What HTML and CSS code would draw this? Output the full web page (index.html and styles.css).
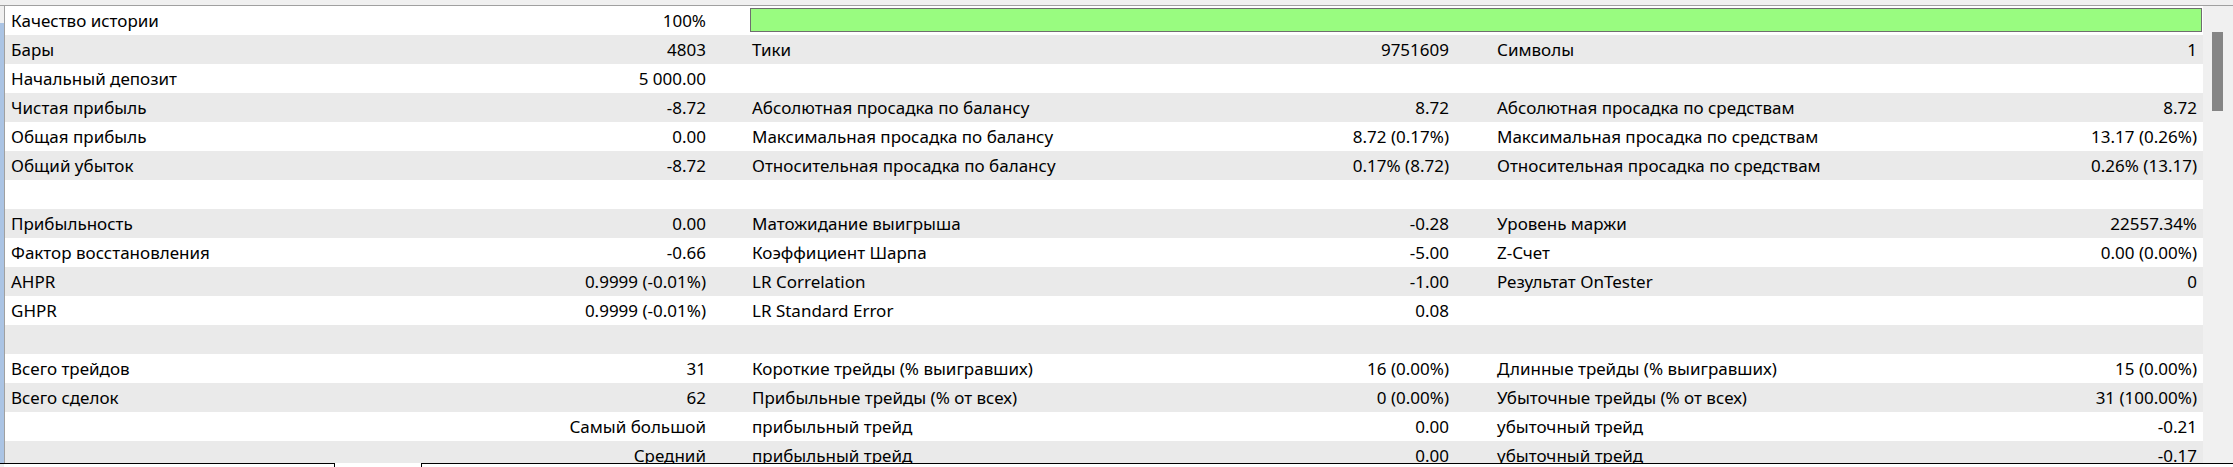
FILE: index.html
```html
<!DOCTYPE html>
<html lang="ru">
<head>
<meta charset="utf-8">
<title>Отчёт тестера</title>
<link rel="stylesheet" href="styles.css">
</head>
<body>
<div class="window">
  <div class="topband"></div>
  <div class="main">
    <div class="leftstrip"></div>
    <div class="report">
      <div class="row">
        <div class="grp g1"><span>Качество истории</span><span>100%</span></div>
        <div class="barcell"><div class="bar"></div></div>
      </div>
      <div class="row alt">
        <div class="grp g1"><span>Бары</span><span>4803</span></div>
        <div class="grp g2"><span>Тики</span><span>9751609</span></div>
        <div class="grp g3"><span>Символы</span><span>1</span></div>
      </div>
      <div class="row">
        <div class="grp g1"><span>Начальный депозит</span><span>5 000.00</span></div>
        <div class="grp g2"></div>
        <div class="grp g3"></div>
      </div>
      <div class="row alt">
        <div class="grp g1"><span>Чистая прибыль</span><span>-8.72</span></div>
        <div class="grp g2"><span>Абсолютная просадка по балансу</span><span>8.72</span></div>
        <div class="grp g3"><span>Абсолютная просадка по средствам</span><span>8.72</span></div>
      </div>
      <div class="row">
        <div class="grp g1"><span>Общая прибыль</span><span>0.00</span></div>
        <div class="grp g2"><span>Максимальная просадка по балансу</span><span>8.72 (0.17%)</span></div>
        <div class="grp g3"><span>Максимальная просадка по средствам</span><span>13.17 (0.26%)</span></div>
      </div>
      <div class="row alt">
        <div class="grp g1"><span>Общий убыток</span><span>-8.72</span></div>
        <div class="grp g2"><span>Относительная просадка по балансу</span><span>0.17% (8.72)</span></div>
        <div class="grp g3"><span>Относительная просадка по средствам</span><span>0.26% (13.17)</span></div>
      </div>
      <div class="row"></div>
      <div class="row alt">
        <div class="grp g1"><span>Прибыльность</span><span>0.00</span></div>
        <div class="grp g2"><span>Матожидание выигрыша</span><span>-0.28</span></div>
        <div class="grp g3"><span>Уровень маржи</span><span>22557.34%</span></div>
      </div>
      <div class="row">
        <div class="grp g1"><span>Фактор восстановления</span><span>-0.66</span></div>
        <div class="grp g2"><span>Коэффициент Шарпа</span><span>-5.00</span></div>
        <div class="grp g3"><span>Z-Счет</span><span>0.00 (0.00%)</span></div>
      </div>
      <div class="row alt">
        <div class="grp g1"><span>AHPR</span><span>0.9999 (-0.01%)</span></div>
        <div class="grp g2"><span>LR Correlation</span><span>-1.00</span></div>
        <div class="grp g3"><span>Результат OnTester</span><span>0</span></div>
      </div>
      <div class="row">
        <div class="grp g1"><span>GHPR</span><span>0.9999 (-0.01%)</span></div>
        <div class="grp g2"><span>LR Standard Error</span><span>0.08</span></div>
        <div class="grp g3"></div>
      </div>
      <div class="row alt"></div>
      <div class="row">
        <div class="grp g1"><span>Всего трейдов</span><span>31</span></div>
        <div class="grp g2"><span>Короткие трейды (% выигравших)</span><span>16 (0.00%)</span></div>
        <div class="grp g3"><span>Длинные трейды (% выигравших)</span><span>15 (0.00%)</span></div>
      </div>
      <div class="row alt">
        <div class="grp g1"><span>Всего сделок</span><span>62</span></div>
        <div class="grp g2"><span>Прибыльные трейды (% от всех)</span><span>0 (0.00%)</span></div>
        <div class="grp g3"><span>Убыточные трейды (% от всех)</span><span>31 (100.00%)</span></div>
      </div>
      <div class="row">
        <div class="grp g1"><span></span><span>Самый большой</span></div>
        <div class="grp g2"><span>прибыльный трейд</span><span>0.00</span></div>
        <div class="grp g3"><span>убыточный трейд</span><span>-0.21</span></div>
      </div>
      <div class="row alt">
        <div class="grp g1"><span></span><span>Средний</span></div>
        <div class="grp g2"><span>прибыльный трейд</span><span>0.00</span></div>
        <div class="grp g3"><span>убыточный трейд</span><span>-0.17</span></div>
      </div>
    </div>
    <div class="scrollbar"><div class="thumb"></div></div>
  </div>
  <div class="tabs">
    <div class="tab t1"></div>
    <div class="tab t2"></div>
    <div class="tab t3"></div>
  </div>
</div>
</body>
</html>
```

FILE: styles.css
```css
html, body {
  margin: 0;
  padding: 0;
}
body {
  background: #f0f0f0;
  font-family: "Noto Sans", "DejaVu Sans", sans-serif;
  font-size: 17px;
  color: #000;
}
.window {
  width: 2233px;
  height: 467px;
  display: flex;
  flex-direction: column;
  overflow: hidden;
}
.topband {
  height: 5px;
  background: #f0f0f0;
  flex: none;
}
.main {
  flex: 1;
  min-height: 0;
  display: flex;
  border-top: 1px solid #a0a0a0;
  overflow: hidden;
}
.leftstrip {
  width: 4px;
  flex: none;
  background: linear-gradient(#f0f0f0 0, #f0f0f0 17px, #abc4e4 17px);
  border-right: 1px solid #a0a0a0;
}
.report {
  flex: 1;
  min-width: 0;
  background: #fff;
  overflow: hidden;
}
.row {
  height: 29px;
  line-height: 29px;
  display: grid;
  grid-template-columns: 741px 745px 1fr;
  background: #fff;
  white-space: nowrap;
}
.row.alt {
  background: #eaeaea;
}
.grp {
  display: flex;
  justify-content: space-between;
  padding-left: 6px;
}
.g1 { padding-right: 40px; }
.g2 { padding-right: 42px; }
.g3 { padding-right: 6px; }
.barcell {
  grid-column: 2 / 4;
  padding: 2px 1px 3px 4px;
}
.bar {
  height: 100%;
  box-sizing: border-box;
  background: #99fc80;
  border: 1px solid #6e6e6e;
}
.scrollbar {
  width: 30px;
  flex: none;
  background: #f0f0f0;
  padding-top: 26px;
  padding-left: 9px;
  box-sizing: border-box;
}
.thumb {
  width: 11px;
  height: 79px;
  background: #858585;
}
.tabs {
  height: 3px;
  flex: none;
  display: flex;
  border-top: 1px solid #000;
  background: #f0f0f0;
  margin-top: -1px;
}
.tab { height: 3px; }
.t1 { width: 330px; margin-left: 4px; background: #fff; border-right: 1px solid #000; }
.t2 { width: 86px; background: #fff; margin-top: -1px; height: 4px; }
.t3 { flex: 1; background: #fff; border-left: 1px solid #000; }
```
